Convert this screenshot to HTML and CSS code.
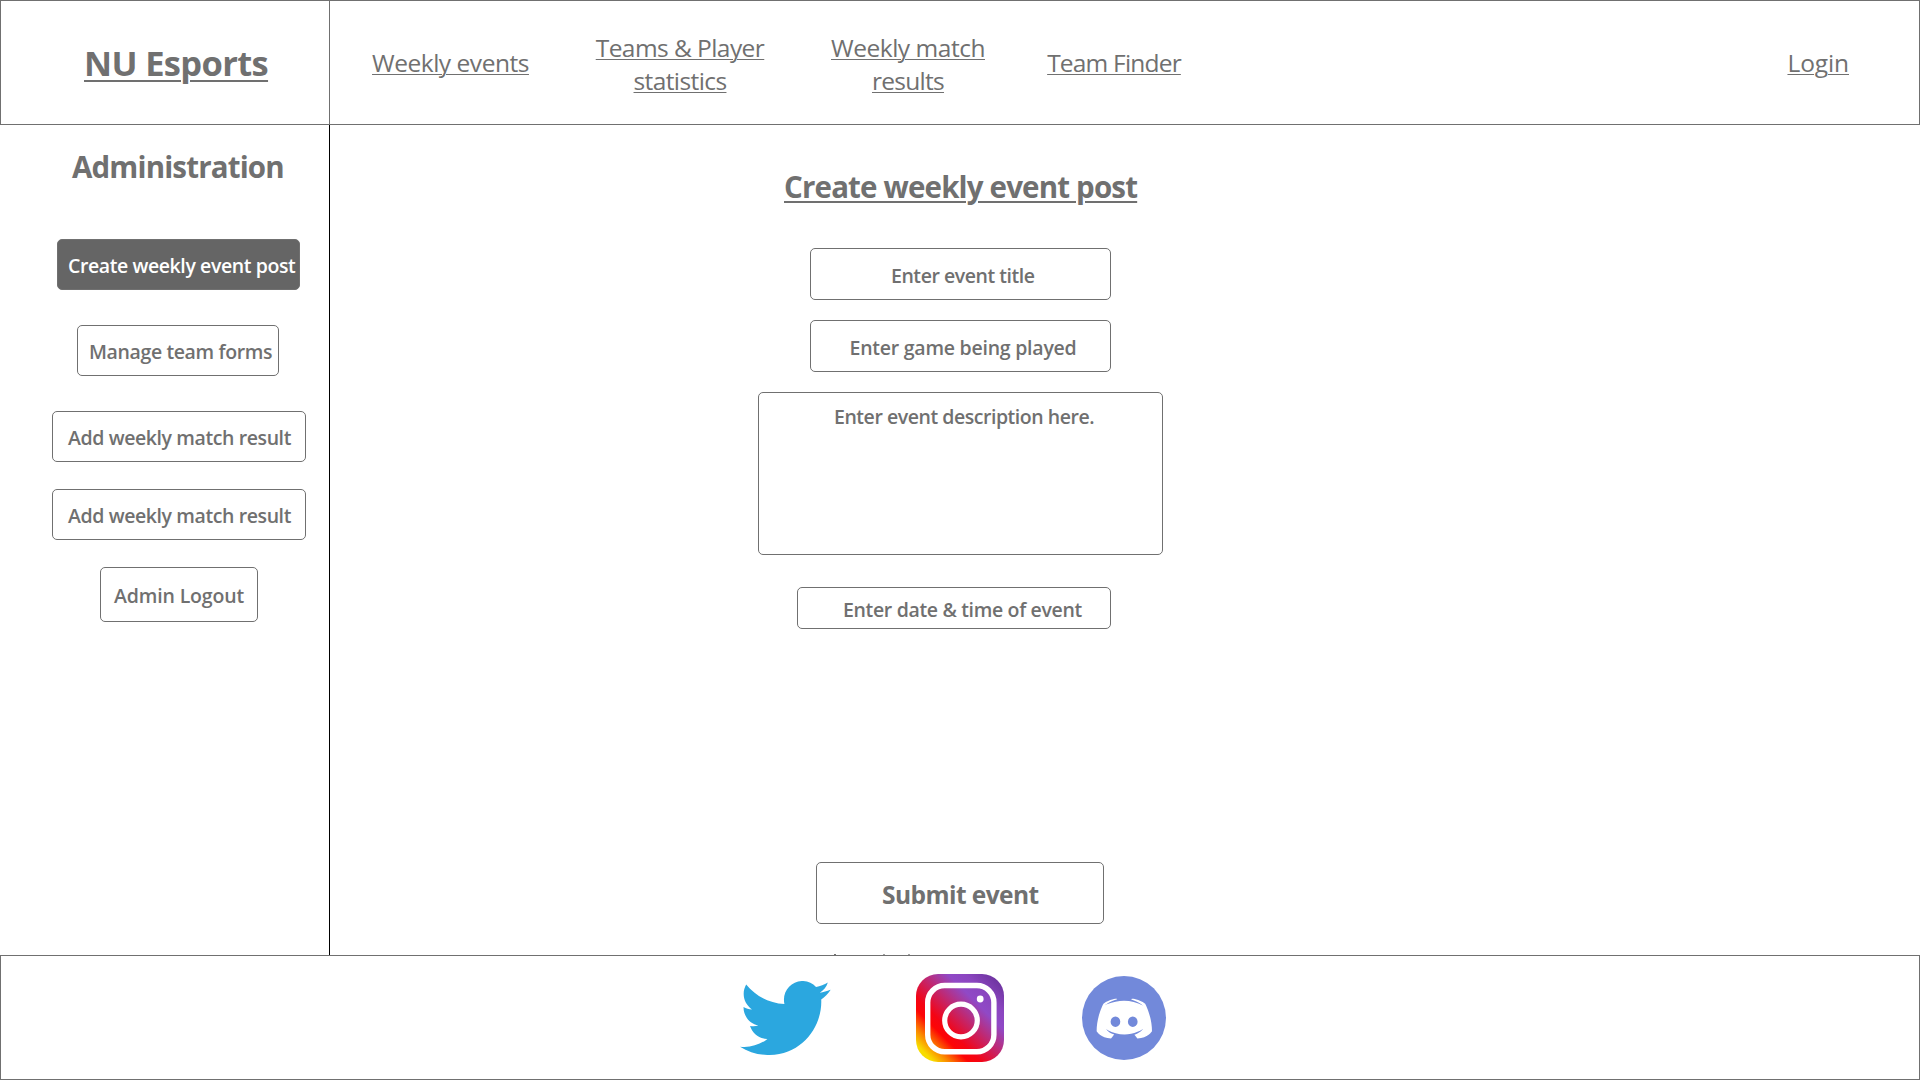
FILE: index.html
```html
<!DOCTYPE html>
<html lang="en">
<head>
<meta charset="utf-8">
<title>NU Esports</title>
<link rel="stylesheet" href="styles.css">
</head>
<body>
<header class="header">
  <a class="brand">NU Esports</a>
  <nav class="nav">
    <a class="nav-link nav-events">Weekly events</a>
    <a class="nav-link nav-teams two-line">Teams &amp; Player<br><span class="statistics">statistics</span></a>
    <a class="nav-link nav-results two-line">Weekly match<br><span class="results">results</span></a>
    <a class="nav-link nav-finder">Team Finder</a>
    <a class="nav-link nav-login">Login</a>
  </nav>
</header>
<div class="content">
  <aside class="sidebar">
    <h2 class="side-title">Administration</h2>
    <a class="box btn-create">Create weekly event post</a>
    <a class="box btn-manage">Manage team forms</a>
    <a class="box btn-add">Add weekly match result</a>
    <a class="box btn-add btn-add-second">Add weekly match result</a>
    <a class="box btn-logout">Admin Logout</a>
  </aside>
  <main class="main">
    <h1 class="title">Create weekly event post</h1>
    <div class="box field-title">Enter event title</div>
    <div class="box field-game">Enter game being played</div>
    <div class="box field-description">Enter event description here.</div>
    <div class="box field-date">Enter date &amp; time of event</div>
    <a class="box submit">Submit event</a>
    <div class="ticks"><i></i><i></i><i></i></div>
  </main>
</div>
<footer class="footer">
  <svg class="twitter" viewBox="0 2.25 24 19.5" preserveAspectRatio="none"><path fill="#2ba7df" d="M23.954 4.569c-.885.389-1.83.654-2.825.775 1.014-.611 1.794-1.574 2.163-2.723-.951.555-2.005.959-3.127 1.184-.896-.959-2.173-1.559-3.591-1.559-2.717 0-4.92 2.203-4.92 4.917 0 .39.045.765.127 1.124C7.691 8.094 4.066 6.13 1.64 3.161c-.427.722-.666 1.561-.666 2.475 0 1.71.87 3.213 2.188 4.096-.807-.026-1.566-.248-2.228-.616v.061c0 2.385 1.693 4.374 3.946 4.827-.413.111-.849.171-1.296.171-.314 0-.615-.03-.916-.086.631 1.953 2.445 3.377 4.604 3.417-1.68 1.319-3.809 2.105-6.102 2.105-.39 0-.779-.023-1.17-.067 2.189 1.394 4.768 2.209 7.557 2.209 9.054 0 13.999-7.496 13.999-13.986 0-.209 0-.42-.015-.63.961-.689 1.8-1.56 2.46-2.548l-.047-.02z"/></svg>
  <svg class="instagram" viewBox="0 0 88 88">
    <defs><linearGradient id="glow" gradientUnits="userSpaceOnUse" x1="0" y1="88" x2="88" y2="0">
      <stop offset=".1" stop-color="#f8dc00"/><stop offset=".19" stop-color="#fb8500"/><stop offset=".3" stop-color="#fd0505"/><stop offset=".37" stop-color="#f40414"/><stop offset=".68" stop-color="#9049c6"/><stop offset=".78" stop-color="#8b46c0"/><stop offset=".92" stop-color="#7035a2"/>
    </linearGradient></defs>
    <rect width="88" height="88" rx="22" fill="url(#glow)"/>
    <rect x="11.7" y="11.5" width="66.2" height="66.2" rx="17" fill="none" stroke="#fff" stroke-width="5.4"/>
    <circle cx="45" cy="46.5" r="16.3" fill="none" stroke="#fff" stroke-width="5.2"/>
    <circle cx="64.2" cy="25" r="3.4" fill="#fff"/>
  </svg>
  <svg class="discord" viewBox="0 0 84 84">
    <circle cx="42" cy="42" r="42" fill="#7289da"/>
    <g transform="translate(.54 .6) scale(.1852)">
      <path fill="#fff" d="M375.04 295.424c0-82.432-36.864-149.248-36.864-149.248-36.864-27.648-71.936-26.88-71.936-26.88l-3.584 4.096c43.52 13.312 63.744 32.512 63.744 32.512-60.811-33.329-132.244-33.335-191.232-7.424-9.472 4.352-15.104 7.424-15.104 7.424s21.248-20.224 67.328-33.536l-2.56-3.072s-35.072-.768-71.936 26.88c0 0-36.864 66.816-36.864 149.248 0 0 21.504 37.12 78.08 38.912 0 0 9.472-11.52 17.152-21.248-32.512-9.728-44.8-30.208-44.8-30.208 3.766 2.636 9.976 6.053 10.496 6.4 43.21 24.198 104.588 32.126 159.744 8.96 8.96-3.328 18.944-8.192 29.44-15.104 0 0-12.8 20.992-46.336 30.464 7.68 9.728 16.896 20.736 16.896 20.736 56.576-1.792 78.336-38.912 78.336-38.912z"/>
      <ellipse cx="177.6" cy="243.2" rx="26.1" ry="28.4" fill="#7289da"/><ellipse cx="271.1" cy="243.2" rx="26.1" ry="28.4" fill="#7289da"/>
    </g>
  </svg>
</footer>
</body>
</html>
```
FILE: styles.css
```css
* { box-sizing: border-box; }
body {
  margin: 0;
  height: 1080px;
  display: flex;
  flex-direction: column;
  overflow: hidden;
  background: #fff;
  color: #707070;
  font-family: "Open Sans", sans-serif;
  white-space: nowrap;
}

/* Header */
.header { height: 125px; flex: none; display: flex; border: 1px solid #707070; }
.brand {
  width: 329px;
  padding-left: 83px;
  border-right: 1px solid #707070;
  font-size: 34.5px;
  font-weight: 700;
  line-height: 123px;
  letter-spacing: -.65px;
  text-decoration: underline 2px;
  text-underline-offset: 4px;
}
.nav { flex: 1; display: flex; padding: 0 70px 0 42px; font-size: 24.5px; line-height: 123px; }
.nav-link { text-decoration: underline 1px; text-underline-offset: 2px; text-align: center; }
.two-line { padding-top: 30px; line-height: 33px; }
.nav-events { width: 157px; letter-spacing: -.47px; }
.nav-teams { width: 169px; margin-left: 66.5px; letter-spacing: -.56px; }
.statistics { letter-spacing: -.6px; }
.nav-results { width: 154px; margin-left: 66.5px; letter-spacing: -.47px; }
.results { letter-spacing: -.72px; }
.nav-finder { width: 134px; margin-left: 62px; letter-spacing: -.8px; }
.nav-login { margin-left: auto; letter-spacing: -.1px; }

/* Shared outlined box */
.box {
  display: block;
  flex: none;
  border: 1px solid #707070;
  border-radius: 5px;
  font-size: 19.5px;
  font-weight: 600;
  line-height: 51px;
}

.content { height: 830px; flex: none; display: flex; }

/* Sidebar */
.sidebar { width: 330px; flex: none; border-right: 1px solid #000; display: flex; flex-direction: column; }
.side-title {
  margin: 22px 0 52px 72px;
  font-size: 29.5px;
  line-height: 40px;
  letter-spacing: -.84px;
}
.sidebar .box { height: 51px; }
.sidebar .btn-create {
  width: 243px;
  margin-left: 57px;
  padding-left: 10px;
  background: #656565;
  color: #fff;
  letter-spacing: -.41px;
}
.btn-manage { width: 202px; margin: 35px 0 0 77px; padding-left: 11px; letter-spacing: -.38px; }
.btn-add { width: 254px; margin: 35px 0 0 52px; padding-left: 15px; letter-spacing: -.4px; }
.btn-add-second { margin-top: 27px; }
.sidebar .btn-logout {
  width: 158px;
  height: 55px;
  margin: 27px 0 0 100px;
  padding-left: 13px;
  line-height: 55px;
  letter-spacing: -.15px;
}

/* Event form */
.main { flex: 1; display: flex; flex-direction: column; padding-left: 428px; }
.title {
  margin: 42px 0 41px 26px;
  font-size: 29.5px;
  line-height: 40px;
  letter-spacing: -.83px;
  text-decoration: underline 2px;
  text-underline-offset: 3px;
}
.field-title, .field-game { width: 301px; height: 52px; margin-left: 52px; line-height: 53px; }
.field-title { padding-left: 80px; letter-spacing: -.45px; }
.field-game { margin-top: 20px; padding-left: 38.5px; letter-spacing: -.24px; }
.field-description {
  width: 405px;
  height: 163px;
  margin-top: 20px;
  padding-left: 75px;
  line-height: 47px;
  letter-spacing: -.46px;
}
.field-date {
  width: 314px;
  height: 42px;
  margin: 32px 0 0 39px;
  padding-left: 45px;
  line-height: 43px;
  letter-spacing: -.34px;
}
.submit {
  width: 288px;
  height: 62px;
  margin: 233px 0 0 58px;
  padding-left: 65px;
  font-size: 24.5px;
  font-weight: 700;
  line-height: 63px;
  letter-spacing: -.55px;
}
.ticks { display: flex; margin: 30px 0 0 76px; }
.ticks i { width: 2px; height: 1px; margin-right: 47px; background: #707070; }
.ticks i + i { margin-right: 23px; background: #a0a0a0; }

/* Footer */
.footer {
  height: 125px;
  flex: none;
  display: flex;
  align-items: flex-start;
  border: 1px solid #707070;
  padding-left: 739px;
}
.twitter { width: 90.5px; height: 74px; margin-top: 25px; }
.instagram { width: 88px; height: 88px; margin: 18px 0 0 85.5px; }
.discord { width: 84px; height: 84px; margin: 20px 0 0 78px; }
```
